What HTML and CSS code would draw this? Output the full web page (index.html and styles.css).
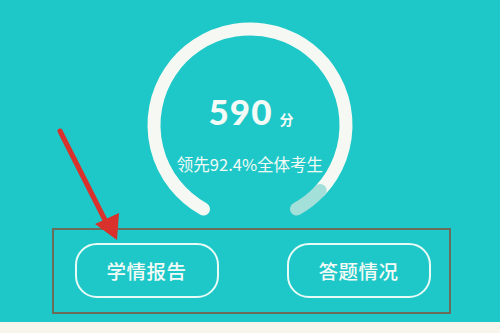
FILE: index.html
```html
<!DOCTYPE html>
<html lang="zh-CN">
<head>
<meta charset="utf-8">
<link rel="stylesheet" href="styles.css">
</head>
<body>
<div class="screen">
  <div class="gauge">
    <svg class="ring" width="220" height="220" viewBox="0 0 220 220">
      <path d="M63.5 194 A96 96 0 1 1 180.2 175.5" fill="none" stroke="#f6f9f3" stroke-width="13" stroke-linecap="round"/>
      <path d="M180.2 175.5 A96 96 0 0 1 156.5 194" fill="none" stroke="#a3e0d9" stroke-width="13" stroke-linecap="round"/>
    </svg>
    <div class="score"><span class="num">590</span><span class="unit">分</span></div>
    <div class="lead">领先92.4%全体考生</div>
  </div>
  <div class="mark">
    <div class="btns">
      <div class="btn">学情报告</div>
      <div class="btn">答题情况</div>
    </div>
  </div>
  <svg class="arrow" width="500" height="333" viewBox="0 0 500 333">
    <line x1="60" y1="131" x2="106" y2="222" stroke="#d9312b" stroke-width="5" stroke-linecap="round"/>
    <polygon points="95,224 119,213 117,240" fill="#d9312b"/>
  </svg>
</div>
<div class="foot"></div>
</body>
</html>
```
FILE: styles.css
```css
html, body { margin: 0; padding: 0; }
body {
  width: 500px;
  height: 333px;
  overflow: hidden;
  background: #f7f5ec;
  font-family: "Noto Sans CJK SC", "Noto Sans", sans-serif;
}
.screen {
  position: relative;
  height: 322px;
  background: #1fc8c8;
  padding-top: 15px;
  box-sizing: border-box;
}
.gauge {
  position: relative;
  width: 220px;
  height: 213px;
  margin: 0 auto;
  display: flex;
  flex-direction: column;
  align-items: center;
}
.ring {
  position: absolute;
  left: 0;
  top: 0;
  overflow: visible;
}
.score {
  position: relative;
  margin-top: 76px;
  display: flex;
  align-items: baseline;
  color: #f4fbf7;
  margin-left: 2px;
}
.num {
  font-family: "Lato", "Noto Sans", sans-serif;
  font-weight: 900;
  font-size: 35px;
  line-height: 40px;
  letter-spacing: 1px;
}
.unit {
  font-size: 14px;
  font-weight: 700;
  margin-left: 7px;
}
.lead {
  position: relative;
  margin-top: 22px;
  font-size: 16.5px;
  line-height: 22px;
  color: #f1faf6;
  white-space: nowrap;
}
.mark {
  margin-left: 52px;
  width: 399px;
  height: 86px;
  border: 2px solid #6c6c5a;
  box-sizing: border-box;
  padding-top: 13px;
}
.btns {
  display: flex;
  justify-content: center;
  gap: 68px;
  margin-left: 2px;
}
.btn {
  width: 144px;
  height: 55px;
  box-sizing: border-box;
  border: 2px solid #e9fbf7;
  border-radius: 22px;
  display: flex;
  align-items: center;
  justify-content: center;
  color: #f4fbf7;
  font-size: 19.5px;
  font-weight: 500;
  letter-spacing: 0.5px;
}
.arrow {
  position: absolute;
  left: 0;
  top: 0;
  pointer-events: none;
}
.foot { height: 11px; }
```
